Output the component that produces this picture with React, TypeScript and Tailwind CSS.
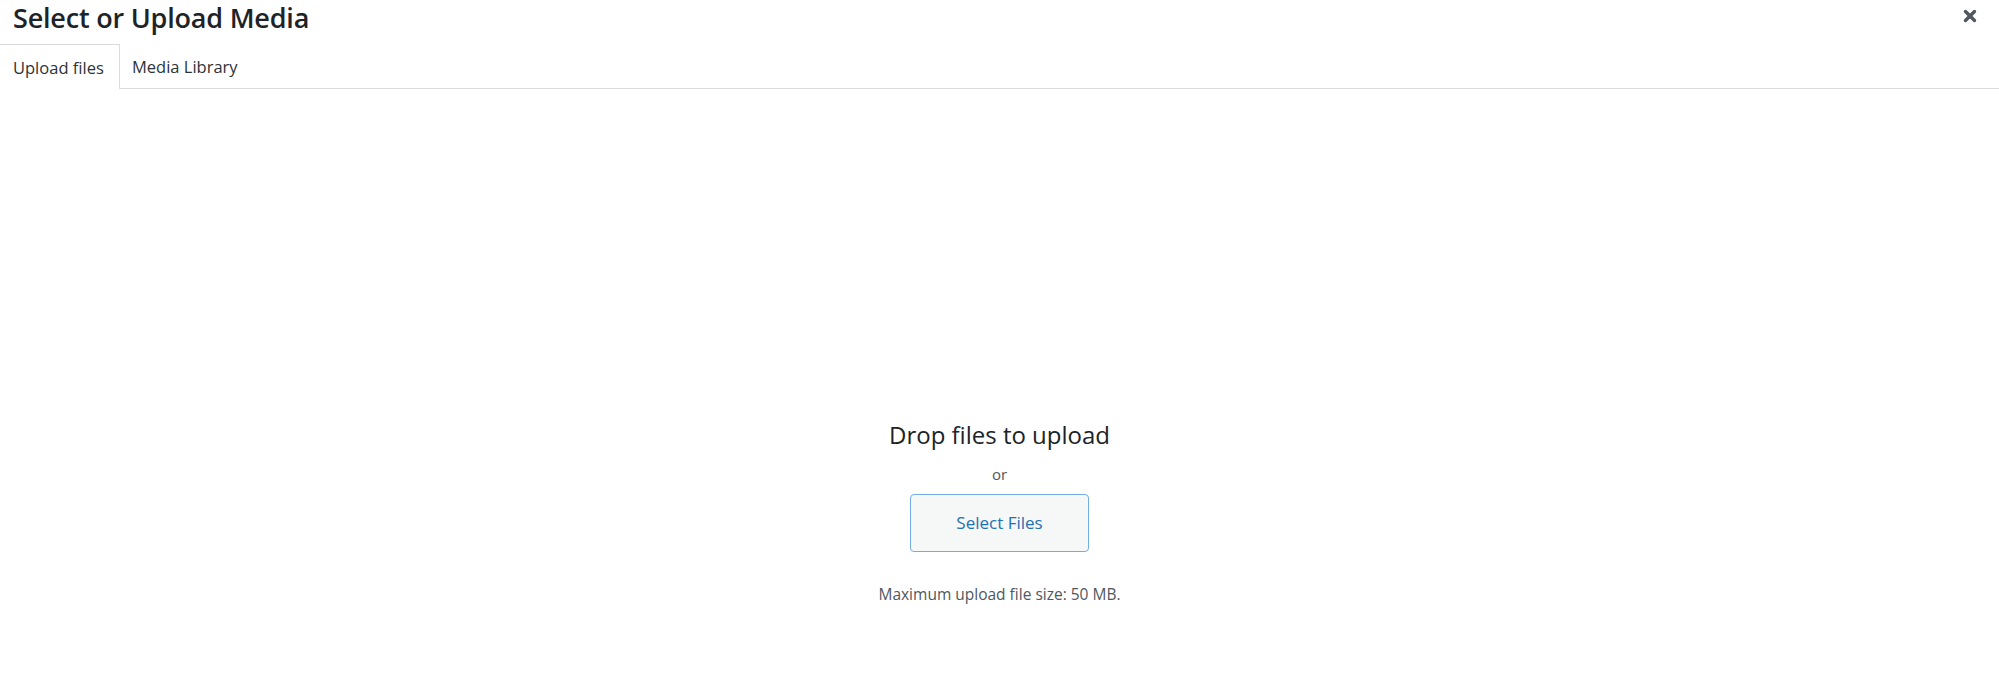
import { X } from 'lucide-react';

export default function App() {
  return (
    <div
      className="w-[1999px] h-[677px] bg-white flex flex-col text-[#1d2327] overflow-hidden"
      style={{ fontFamily: '"Open Sans", "Noto Sans", sans-serif' }}
    >
      {/* Title bar */}
      <div className="h-[44px] flex items-start justify-between">
        <h1 className="pl-[13px] pt-[0px] text-[27px] leading-[36px] font-semibold tracking-[-0.2px]">
          Select or Upload Media
        </h1>
        <button className="mt-[7px] mr-[20px] w-[18px] h-[18px] flex items-center justify-center text-[#50575e]">
          <X className="w-[18px] h-[18px]" strokeWidth={4.5} />
        </button>
      </div>

      {/* Tabs */}
      <div className="h-[45px] flex items-stretch">
        <div className="w-[120px] border-t border-r border-[#dcdcde] bg-white flex items-center pt-[3px] pl-[13px] text-[16.5px] text-[#2c3338]">
          Upload files
        </div>
        <div className="flex-1 border-b border-[#dcdcde] flex items-center pt-[3px] pl-[12px] text-[16.5px] text-[#2c3338]">
          Media Library
        </div>
      </div>

      {/* Upload area */}
      <div className="flex-1 flex flex-col items-center">
        <p className="mt-[329px] text-[24px] leading-[34px] text-[#1d2327]">Drop files to upload</p>
        <p className="mt-[11px] text-[15px] leading-[22px] text-[#50575e]">or</p>
        <button className="mt-[9px] w-[179px] h-[58px] rounded-[4px] border border-[#72aee6] bg-[#f6f7f7] text-[17px] text-[#2271b1]">
          Select Files
        </button>
        <p className="mt-[31px] text-[15.5px] leading-[22px] text-[#50575e]">Maximum upload file size: 50 MB.</p>
      </div>
    </div>
  );
}
